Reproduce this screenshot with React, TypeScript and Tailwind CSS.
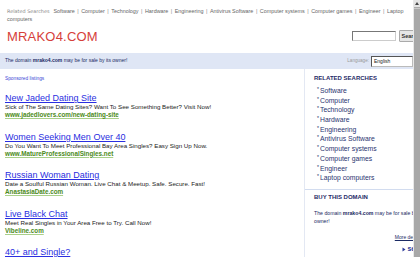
import React from "react";

const topLinks = [
  "Software",
  "Computer",
  "Technology",
  "Hardware",
  "Engineering",
  "Antivirus Software",
  "Computer systems",
  "Computer games",
  "Engineer",
  "Laptop computers",
];

const ads = [
  {
    title: "New Jaded Dating Site",
    desc: "Sick of The Same Dating Sites? Want To See Something Better? Visit Now!",
    url: "www.jadedlovers.com/new-dating-site",
  },
  {
    title: "Women Seeking Men Over 40",
    desc: "Do You Want To Meet Professional Bay Area Singles? Easy Sign Up Now.",
    url: "www.MatureProfessionalSingles.net",
  },
  {
    title: "Russian Woman Dating",
    desc: "Date a Soulful Russian Woman. Live Chat & Meetup. Safe. Secure. Fast!",
    url: "AnastasiaDate.com",
  },
  {
    title: "Live Black Chat",
    desc: "Meet Real Singles in Your Area Free to Try. Call Now!",
    url: "Vibeline.com",
  },
  {
    title: "40+ and Single?",
    desc: "",
    url: "",
  },
];

export default function App() {
  return (
    <div
      className="flex w-[420px] h-[257px] overflow-hidden bg-white"
      style={{ fontFamily: '"Liberation Sans", Arial, sans-serif' }}
    >
      <div className="w-[413px] shrink-0 overflow-hidden">
        {/* top related links */}
        <div className="pt-[7px] pl-[7px] w-[412px] text-[5.4px] leading-[8px] text-[#666]">
          <span
            className="text-[4.9px] text-[#888] mr-[4px]"
            style={{ fontFamily: '"DejaVu Sans", Verdana, sans-serif' }}
          >
            Related Searches
          </span>
          {topLinks.map((l, i) => (
            <React.Fragment key={l}>
              <span>{l}</span>
              {i < topLinks.length - 1 && (
                <span className="mx-[2.5px] text-[#888]">|</span>
              )}
            </React.Fragment>
          ))}
        </div>

        {/* logo + search */}
        <div className="flex items-start justify-between h-[30px] pl-[7px]">
          <div className="mt-[6px] text-[13px] leading-[16px] text-[#d6403a] tracking-[0.2px]">
            MRAKO4.COM
          </div>
          <div className="mt-[7px] flex items-start gap-[3px] -mr-[12px]">
            <div className="w-[44px] h-[10px] mt-[1px] border border-t-[#777] border-l-[#777] border-r-[#ccc] border-b-[#ccc] bg-white" />
            <div className="w-[26px] h-[12px] bg-[#e6e6e6] border border-[#aaa] rounded-[1px] text-[5.5px] font-bold text-[#333] leading-[10px] pl-[1.5px]">
              Search
            </div>
          </div>
        </div>

        {/* blue bar */}
        <div className="flex items-center justify-between h-[16px] bg-[#dfe6f5] pl-[5px]">
          <div className="text-[5px] text-[#1b2a64]">
            The domain <span className="font-bold">mrako4.com</span> may be for sale by its owner!
          </div>
          <div className="flex items-center">
            <span className="text-[4.6px] text-[#999] mr-[2px]">Language:</span>
            <div className="w-[42px] h-[11px] bg-white border border-t-[#555] border-l-[#555] border-r-[#bbb] border-b-[#bbb] text-[5px] leading-[9px] pl-[2px] text-[#222]">
              English
            </div>
          </div>
        </div>

        {/* columns */}
        <div className="flex">
          <div className="w-[304px] shrink-0 pl-[5px] pt-[7px]">
            <div className="text-[4.8px] leading-[6px] text-[#3b47d6]">Sponsored listings</div>
            <div className="mt-[11px] flex flex-col gap-[12.5px]">
              {ads.map((a) => (
                <div key={a.title}>
                  <div className="text-[9px] leading-[10px] text-[#2a2ee0] underline">{a.title}</div>
                  {a.desc && (
                    <div className="text-[6.2px] leading-[8px] text-[#222] whitespace-nowrap">{a.desc}</div>
                  )}
                  {a.url && (
                    <div className="text-[6.3px] leading-[8px] font-bold text-[#4b8a20] underline decoration-[#a9d08a]">
                      {a.url}
                    </div>
                  )}
                </div>
              ))}
            </div>
          </div>

          <div className="w-[130px] shrink-0 border-l border-[#e3e8f3] h-[200px]">
            <div className="pl-[9px] pt-[5px]">
              <div className="text-[6px] leading-[8px] font-bold text-[#1f2a66]">RELATED SEARCHES</div>
              <div className="mt-[4px]">
                {topLinks.map((l) => (
                  <div key={l} className="flex items-start h-[9.7px] leading-[9.7px]">
                    <span className="text-[5px] leading-[6px] text-[#1f2a66] w-[3px] ml-[3px]">*</span>
                    <span className="text-[6.8px] text-[#2a3470]">{l}</span>
                  </div>
                ))}
              </div>
            </div>
            <div className="mt-[6px] border-t border-[#d2dcef] pl-[9px] pt-[3px]">
              <div className="text-[6px] leading-[8px] font-bold text-[#1f2a66]">BUY THIS DOMAIN</div>
              <div className="mt-[8px] text-[5.2px] leading-[8px] text-[#1b2a64] w-[112px]">
                The domain <span className="font-bold">mrako4.com</span> may be for sale by its owner!
              </div>
              <div className="mt-[8px] flex justify-end pr-[12px]">
                <span className="text-[5px] leading-[8px] text-[#1b2a64] underline whitespace-nowrap">
                  More details
                </span>
              </div>
              <div className="mt-[4px] flex justify-end items-center pr-[4px] text-[7px] leading-[8px] font-bold text-[#2a3a9a]">
                <svg width="4" height="5" viewBox="0 0 4 5" className="mr-[1px] mt-[2px]">
                  <path d="M0.5 0.5 L3.5 2.5 L0.5 4.5 Z" fill="#2a3a9a" />
                </svg>
                <span>search</span>
              </div>
            </div>
          </div>
        </div>
      </div>

      {/* scrollbar */}
      <div className="w-[7px] shrink-0 h-full bg-[#c9c9c9] border-l border-[#e8e8e8] flex flex-col">
        <div className="h-[8px] bg-[#e4e4e4] border-b border-[#aaa] flex items-center justify-center">
          <svg width="4" height="3" viewBox="0 0 4 3">
            <path d="M0 3 L2 0 L4 3 Z" fill="#444" />
          </svg>
        </div>
        <div className="flex-1 bg-[#a8a8a8] mt-[1px]" />
      </div>
    </div>
  );
}
